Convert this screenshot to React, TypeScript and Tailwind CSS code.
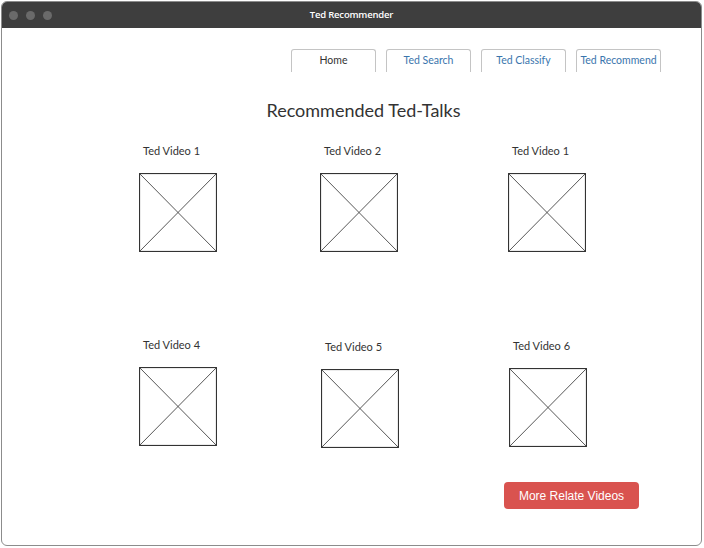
const tabs = [
  { label: 'Home', active: true },
  { label: 'Ted Search', active: false },
  { label: 'Ted Classify', active: false },
  { label: 'Ted Recommend', active: false },
];

const rows = [
  [
    { title: 'Ted Video 1', cls: 'ml-[137px]', pad: 'pt-0' },
    { title: 'Ted Video 2', cls: 'ml-[103px]', pad: 'pt-0' },
    { title: 'Ted Video 1', cls: 'ml-[110px]', pad: 'pt-0' },
  ],
  [
    { title: 'Ted Video 4', cls: 'ml-[137px]', pad: 'pt-0' },
    { title: 'Ted Video 5', cls: 'ml-[104px]', pad: 'pt-[2px]' },
    { title: 'Ted Video 6', cls: 'ml-[110px]', pad: 'pt-[1px]' },
  ],
];

function Placeholder() {
  return (
    <svg width="78" height="79" viewBox="0 0 78 79" className="block">
      <rect x="0.5" y="0.5" width="77" height="78" fill="white" stroke="#333" strokeWidth="1.2" />
      <line x1="0.5" y1="0.5" x2="77.5" y2="78.5" stroke="#444" strokeWidth="0.9" />
      <line x1="77.5" y1="0.5" x2="0.5" y2="78.5" stroke="#444" strokeWidth="0.9" />
    </svg>
  );
}

export default function App() {
  return (
    <div className="w-[704px] h-[548px] bg-white p-[1px] font-['Lato',sans-serif]">
      <div className="w-[701px] h-[545px] flex flex-col border border-[#8c8c8c] rounded-[6px] overflow-hidden bg-white">
        {/* Title bar */}
        <div className="relative h-[26px] bg-[#3e3e3e] flex items-center justify-center shrink-0">
          <div className="absolute left-[7px] top-[9px] flex gap-[8px]">
            <span className="w-[9px] h-[9px] rounded-full bg-[#6a6a6a]" />
            <span className="w-[9px] h-[9px] rounded-full bg-[#6a6a6a]" />
            <span className="w-[9px] h-[9px] rounded-full bg-[#6a6a6a]" />
          </div>
          <span className="text-[9.5px] font-semibold text-white tracking-[-0.2px] font-['Open_Sans',sans-serif]">Ted Recommender</span>
        </div>

        {/* Tabs */}
        <div className="flex justify-end gap-[10px] pr-[40px] pt-[21px]">
          {tabs.map((t) => (
            <div
              key={t.label}
              className={`w-[85px] h-[23px] flex items-center justify-center border-t border-x border-[#c4c4c4] rounded-t-[3px] text-[10.5px] ${
                t.active ? 'text-[#333]' : 'text-[#3a75ad]'
              }`}
            >
              {t.label}
            </div>
          ))}
        </div>

        {/* Heading */}
        <h1 className="mt-[26px] text-center text-[18px] leading-[24px] text-[#333] pl-[24px]">
          Recommended Ted-Talks
        </h1>

        {/* Video grid */}
        <div className="flex flex-col gap-[86px] mt-[22px]">
          {rows.map((row, i) => (
            <div key={i} className="flex">
              {row.map((v, j) => (
                <div key={j} className={`${v.cls} ${v.pad} w-[78px] flex flex-col`}>
                  <span className="pl-[4px] text-[11px] leading-[14px] text-[#333] whitespace-nowrap">
                    {v.title}
                  </span>
                  <div className="mt-[15px]">
                    <Placeholder />
                  </div>
                </div>
              ))}
            </div>
          ))}
        </div>

        {/* Button */}
        <div className="flex justify-end pr-[62px] mt-[34px]">
          <button className="w-[135px] h-[27px] rounded-[4px] bg-[#d9534f] text-white text-[12px] font-['Liberation_Sans',sans-serif]">
            More Relate Videos
          </button>
        </div>
      </div>
    </div>
  );
}
